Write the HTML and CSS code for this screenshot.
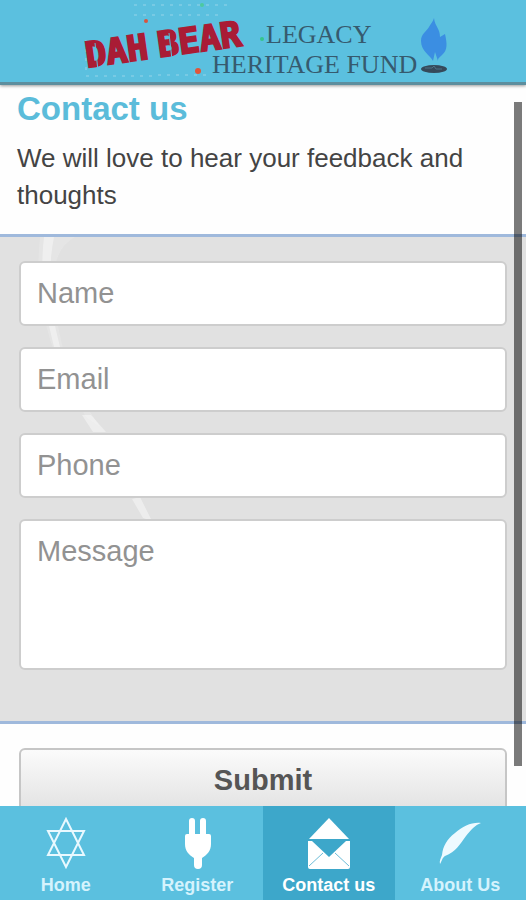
FILE: index.html
```html
<!DOCTYPE html>
<html lang="en">
<head>
    <meta charset="UTF-8">
    <meta name="viewport" content="width=device-width, initial-scale=1.0">
    <title>Contact us</title>
    <link rel="stylesheet" href="styles.css">
</head>
<body>
    <header class="header">
        <svg class="logo" width="370" height="82" viewBox="0 0 370 82" role="img" aria-label="Dah Bear Legacy Heritage Fund">
            <!-- faint dots behind the name -->
            <g class="dots">
                <path d="M56 5H150M56 15H140M80 75H128M8 76H76M8 40V72" />
            </g>
            <g class="fund">
                <text x="188" y="43">LEGACY</text>
                <text x="134" y="73">HERITAGE FUND</text>
            </g>
            <g class="name" transform="rotate(-8 12 68)">
                <text x="9" y="67">DAH</text>
                <text x="82" y="67">BEAR</text>
            </g>
            <path class="stencil" d="M17 43l3 28M91 33l3 27" />
            <circle cx="68" cy="21" r="2" fill="#d8543e" />
            <circle cx="120" cy="71" r="3" fill="#e0553a" />
            <circle cx="184" cy="39" r="2" fill="#35c58c" />
            <circle cx="124" cy="5" r="2" fill="#4cc9a0" />
            <path fill="#3b8ee2" d="M356 18c1 9 6 10 6 19l5-3c2 9 3 16-3 21-3 3-4 3-4 6l-3-9-2 9c-3-6-12-10-12-20 0-7 5-9 8-14 2-4 4-5 5-9z" />
            <ellipse cx="356" cy="69" rx="13" ry="4" fill="#35495a" />
            <path d="M347 68h7l2-2 2 3h6" fill="none" stroke="#4d7285" />
        </svg>
    </header>

    <main class="content">
        <div class="intro">
            <h1>Contact us</h1>
            <p>We will love to hear your feedback and thoughts</p>
        </div>
        <form id="contact-form">
            <div class="fields">
                <svg class="streak" width="200" height="290" viewBox="0 0 200 290" aria-hidden="true">
                    <path class="glow" d="M40 0H75Q52 12 54 50Q57 130 100 190L86 180Q30 90 40 0z" />
                    <path d="M44 0H54Q44 50 60 110H54Q38 50 44 0zM82 178l9 0 15 17-13 0zM132 262l8-2 12 24-9-3z" />
                </svg>
                <input type="text" name="name" class="field" placeholder="Name" aria-label="Name">
                <input type="email" name="email" class="field" placeholder="Email" aria-label="Email">
                <input type="tel" name="phone" class="field" placeholder="Phone" aria-label="Phone">
                <textarea name="message" class="field message" placeholder="Message" aria-label="Message"></textarea>
            </div>
            <div class="actions">
                <button type="submit" class="btn">Submit</button>
            </div>
        </form>
    </main>
    <div class="scroll-thumb"></div>

    <nav class="tabs">
        <a href="#home" class="tab">
            <svg width="52" height="56" viewBox="0 0 52 56" fill="none" stroke="#e9f9ff" stroke-width="2" aria-hidden="true">
                <path d="M26 4L44 40H8zM26 52L44 16H8z" />
            </svg>
            <span>Home</span>
        </a>
        <a href="#register" class="tab">
            <svg width="52" height="56" viewBox="0 0 52 56" fill="#fff" aria-hidden="true">
                <path d="M18 19V6q0-3 3-3t3 3v13h5V6q0-3 3-3t3 3v13h3q2 0 2 2v8c0 7-4 11-9 14v7q0 4-4 4t-4-4v-7c-5-3-9-7-9-14v-8q0-2 2-2z" />
            </svg>
            <span>Register</span>
        </a>
        <a href="#contact" class="tab active">
            <svg width="52" height="56" viewBox="0 0 52 56" fill="#fff" aria-hidden="true">
                <path d="M26 3l20 21H6z" />
                <path d="M5 26h4l17 16 17-16h4v26q0 2-2 2H7q-2 0-2-2z" />
                <path d="M20 38L6 51M32 38l14 13" stroke="#6dbdd8" fill="none" />
            </svg>
            <span>Contact us</span>
        </a>
        <a href="#about" class="tab">
            <svg width="52" height="56" viewBox="0 0 52 56" fill="#eefaff" aria-hidden="true">
                <path d="M6 49c-1-3 1-6 2-9 1-9 5-16 13-22C29 11 38 7 47 8c-6 2-10 7-15 13-6 8-10 16-21 20-3 2-3 5-5 8z" />
            </svg>
            <span>About Us</span>
        </a>
    </nav>
</body>
</html>
```

FILE: styles.css
```css
* {
    box-sizing: border-box;
}

body {
    display: flex;
    flex-direction: column;
    height: 100vh;
    margin: 0;
    position: relative;
    font-family: "Liberation Sans", Arial, sans-serif;
    background-color: #fefefe;
    overflow: hidden;
}

/* header */
.header {
    display: flex;
    justify-content: center;
    flex: none;
    background-color: #5bc0df;
    border-bottom: 3px solid #5d8e9e;
    box-shadow: 0 1px 3px rgba(0, 0, 0, 0.4);
    z-index: 1;
}

.logo {
    display: block;
}

.name {
    font-family: "DejaVu Sans Mono", monospace;
    font-size: 35px;
    font-weight: bold;
    fill: #a91c35;
    stroke: #a91c35;
    stroke-width: 2;
}

.fund {
    font-family: "Liberation Serif", serif;
    font-size: 26px;
    fill: #365a6e;
}

.stencil {
    stroke: #5bc0df;
    fill: none;
}

.dots {
    fill: none;
    stroke: #78cae4;
    stroke-width: 2;
    stroke-dasharray: 3 6;
}

/* page content */
.content {
    flex: 1;
    min-height: 0;
    overflow-y: auto;
    scrollbar-width: none;
}

.intro {
    padding: 5px 17px 20px;
}

.intro h1 {
    margin: 0;
    font-size: 33px;
    line-height: 38px;
    color: #5bbcda;
}

.intro p {
    margin: 12px 0 0;
    font-size: 26px;
    line-height: 37px;
    color: #444;
}

.fields {
    display: flex;
    flex-direction: column;
    gap: 21px;
    position: relative;
    padding: 24px 19px 51px;
    background-color: #e1e1e1;
    border-top: 3px solid #9fb9dc;
    border-bottom: 3px solid #9fb9dc;
}

.streak {
    position: absolute;
    top: 0;
    left: 0;
    fill: rgba(255, 255, 255, 0.4);
}

.streak .glow {
    fill: rgba(255, 255, 255, 0.15);
}

.field {
    position: relative;
    display: block;
    width: 100%;
    height: 65px;
    padding: 0 16px;
    border: 2px solid #cdcdcd;
    border-radius: 6px;
    background-color: #fff;
    font-family: inherit;
    font-size: 29px;
    line-height: 33px;
    color: #444;
}

.field::placeholder {
    color: #929292;
    opacity: 1;
}

.message {
    height: 151px;
    padding-top: 14px;
    resize: none;
}

.actions {
    padding: 24px 19px;
}

.btn {
    width: 100%;
    height: 65px;
    border: 2px solid #c6c6c6;
    border-radius: 6px;
    background: linear-gradient(#fbfbfb, #e2e2e2);
    font-family: inherit;
    font-size: 29px;
    font-weight: bold;
    color: #555;
    cursor: pointer;
}

.scroll-thumb {
    position: absolute;
    top: 102px;
    right: 4px;
    bottom: 134px;
    width: 8px;
    background-color: rgba(0, 0, 0, 0.52);
}

/* bottom tabs */
.tabs {
    display: flex;
    flex: none;
    background-color: #5bc0df;
}

.tab {
    display: flex;
    flex: 1 1 0;
    flex-direction: column;
    align-items: center;
    gap: 2px;
    padding: 9px 0 2px;
    font-size: 18px;
    font-weight: bold;
    line-height: 25px;
    color: #d5f3fd;
    text-decoration: none;
    white-space: nowrap;
}

.tab.active {
    background-color: #3da7ca;
    color: #fff;
}
```
